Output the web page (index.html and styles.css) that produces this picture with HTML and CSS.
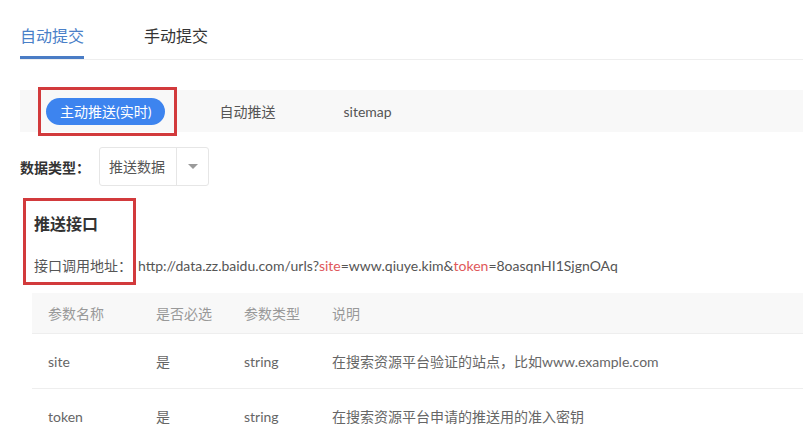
FILE: index.html
```html
<!DOCTYPE html>
<html lang="zh-CN">

<head>
  <meta charset="UTF-8" />
  <meta name="viewport" content="width=device-width, initial-scale=1.0" />
  <title>链接提交</title>
  <link rel="stylesheet" href="styles.css">
</head>

<body>
  <section class="page">
    <div class="tabs">
      <span class="tab active">自动提交</span>
      <span class="tab">手动提交</span>
    </div>

    <div class="subnav">
      <span class="mark">
        <span class="pill">主动推送(实时)</span>
      </span>
      <span class="sub-item first">自动推送</span>
      <span class="sub-item">sitemap</span>
    </div>

    <div class="type-row">
      <span class="type-label">数据类型：</span>
      <div class="select">
        <span class="select-text">推送数据</span>
        <span class="select-arrow"><i></i></span>
      </div>
    </div>

    <div class="api">
      <div class="mark api-box">
        <h3>推送接口</h3>
        <span class="api-label">接口调用地址：</span>
      </div>
      <span class="api-url">http://data.zz.baidu.com/urls?<em>site</em>=www.qiuye.kim&amp;<em>token</em>=8oasqnHI1SjgnOAq</span>
    </div>

    <table class="params">
      <thead>
        <tr>
          <th class="c1">参数名称</th>
          <th class="c2">是否必选</th>
          <th class="c3">参数类型</th>
          <th>说明</th>
        </tr>
      </thead>
      <tbody>
        <tr>
          <td>site</td>
          <td>是</td>
          <td>string</td>
          <td>在搜索资源平台验证的站点，比如www.example.com</td>
        </tr>
        <tr>
          <td>token</td>
          <td>是</td>
          <td>string</td>
          <td>在搜索资源平台申请的推送用的准入密钥</td>
        </tr>
      </tbody>
    </table>
  </section>
</body>

</html>
```

FILE: styles.css
```css
body,
html {
  margin: 0;
  height: 100%;
  overflow: hidden;
}

body {
  background-color: #fff;
  color: #555;
  font-family: Lato, "Noto Sans CJK SC", sans-serif;
  font-size: 14px;
}

.page {
  padding-left: 20px;
}

/* 顶部标签 */
.tabs {
  display: flex;
  gap: 60px;
  padding-top: 24px;
  border-bottom: 1px solid #eee;
}

.tab {
  font-size: 16px;
  line-height: 24px;
  padding-bottom: 8px;
  border-bottom: 3px solid transparent;
  color: #333;
}

.tab.active {
  color: #4a80c8;
  border-bottom-color: #4a7cc5;
}

/* 推送方式 */
.subnav {
  display: flex;
  align-items: center;
  height: 42px;
  margin-top: 30px;
  padding-left: 18px;
  background-color: #f8f8f8;
}

.mark {
  border: 3px solid #d23a3c;
}

.subnav .mark {
  padding: 8px 9px 8px 5px;
}

.pill {
  display: block;
  height: 27px;
  line-height: 27px;
  padding: 0 14px;
  border-radius: 14px;
  background-color: #3d84ef;
  color: #fff;
}

.sub-item {
  color: #555;
  margin-left: 68px;
}

.sub-item.first {
  margin-left: 42px;
}

/* 数据类型 */
.type-row {
  display: flex;
  align-items: center;
  margin-top: 15px;
}

.type-label {
  color: #333;
  font-weight: bold;
  width: 79px;
}

.select {
  display: flex;
  width: 108px;
  height: 37px;
  border: 1px solid #e6e6e6;
  border-radius: 3px;
}

.select-text {
  width: 67px;
  padding-left: 9px;
  line-height: 37px;
  border-right: 1px solid #e6e6e6;
  color: #555;
}

.select-arrow {
  flex: 1;
  display: flex;
  align-items: center;
  justify-content: center;
}

.select-arrow i {
  width: 0;
  height: 0;
  border-left: 5px solid transparent;
  border-right: 5px solid transparent;
  border-top: 5px solid #9a9a9a;
}

/* 推送接口 */
.api {
  display: flex;
  align-items: flex-end;
  margin-top: 12px;
  margin-left: 3px;
}

.api-box {
  display: flex;
  flex-direction: column;
  padding: 12px 1px 6px 8px;
}

.api-box h3 {
  margin: 0;
  font-size: 16px;
  line-height: 22px;
  color: #333;
}

.api-label {
  margin-top: 21px;
  line-height: 20px;
}

.api-url {
  line-height: 20px;
  padding: 0 0 9px 2px;
}

.api-url em {
  font-style: normal;
  color: #e0585a;
}

/* 参数表 */
.params {
  margin-top: 8px;
  margin-left: 12px;
  width: calc(100% - 12px);
  border-collapse: collapse;
}

.params th,
.params td {
  text-align: left;
  padding: 0 0 0 16px;
  border-bottom: 1px solid #eee;
}

.params th {
  height: 40px;
  font-weight: normal;
  color: #999;
  background-color: #f8f8f8;
}

.params td {
  height: 54px;
  color: #666;
}

.params .c1 {
  width: 92px;
}

.params .c2,
.params .c3 {
  width: 72px;
}
```
